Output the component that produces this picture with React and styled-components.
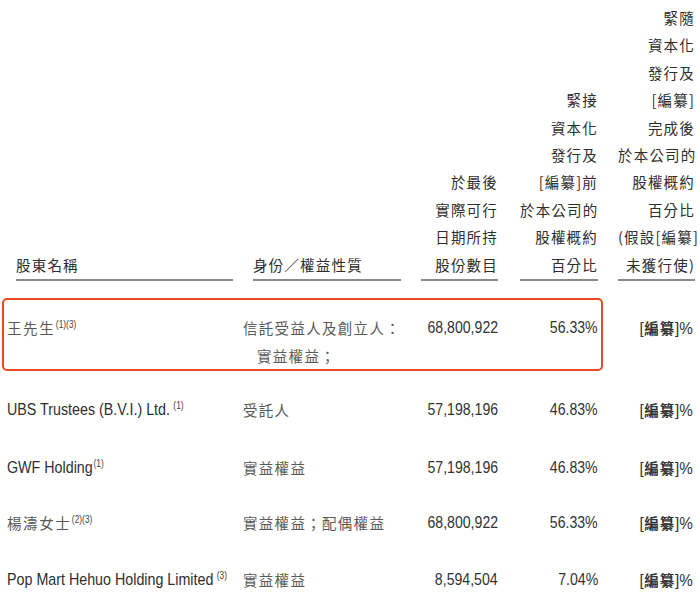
import React from 'react';
import styled, { createGlobalStyle } from 'styled-components';

const GlobalStyle = createGlobalStyle`
  html, body {
    margin: 0;
    padding: 0;
    background: #ffffff;
  }
  body {
    font-family: "Liberation Sans", Arial, "Noto Sans CJK TC", sans-serif;
    color: #333;
  }
`;

const cols = '233px 168px 97px 100px 97px';

const Table = styled.div`
  width: 700px;
  padding-top: 4px;
`;

const HeadRow = styled.div`
  display: grid;
  grid-template-columns: ${cols};
  align-items: end;
`;

const HeadCell = styled.div`
  margin-left: ${(p) => p.$indent}px;
  border-bottom: 2px solid #8a8a8a;
  padding-bottom: 1px;
  font-family: "Noto Sans CJK TC", sans-serif;
  font-size: 14.5px;
  line-height: 27.4px;
  letter-spacing: 1.2px;
  color: #2e2e2e;
  text-align: ${(p) => (p.$right ? 'right' : 'left')};
  white-space: nowrap;
`;

const Row = styled.div`
  position: relative;
  display: grid;
  grid-template-columns: ${cols};
  align-items: start;
  padding-top: ${(p) => p.$gap}px;
  line-height: 28px;
`;

const Highlight = styled.div`
  position: absolute;
  left: 2px;
  top: 17px;
  width: 601px;
  height: 73px;
  box-sizing: border-box;
  border: 2.5px solid #ea4a1f;
  border-radius: 5px;
  pointer-events: none;
`;

/* the source uses a condensed sans; squeeze Liberation Sans to its width */
const Narrow = styled.span`
  display: inline-block;
  transform: scaleX(${(p) => p.$scale || 0.84});
  transform-origin: ${(p) => (p.$right ? 'right' : 'left')} center;
`;

const Name = styled.div`
  padding-left: 7px;
  font-size: 17px;
  color: #2f2f2f;
  white-space: nowrap;
`;

const Zh = styled.span`
  font-family: "Noto Sans CJK TC", sans-serif;
  font-size: 14.5px;
  letter-spacing: 1.6px;
  color: #5a5a5a;
`;

const Sup = styled.sup`
  font-size: 10px;
  letter-spacing: 0;
  vertical-align: 6px;
  line-height: 0;
  margin-left: ${(p) => (p.$space ? 4 : 1)}px;
  color: #444;
`;

const Nature = styled.div`
  padding-left: 10px;
  font-family: "Noto Sans CJK TC", sans-serif;
  font-size: 14.5px;
  letter-spacing: 1.3px;
  color: #5a5a5a;
  white-space: nowrap;
`;

const NatureLine = styled.div`
  padding-left: ${(p) => p.$indent || 0}px;
`;

const Num = styled.div`
  text-align: right;
  font-size: 17px;
  color: #333;
  white-space: nowrap;
`;

const Bracket = styled.span`
  font-family: "Noto Sans CJK TC", sans-serif;
  font-size: 14.5px;
  font-weight: 700;
  letter-spacing: 1px;
  color: #333;
`;

const headers = [
  { indent: 16, lines: ['股東名稱'] },
  { indent: 20, lines: ['身份／權益性質'] },
  { indent: 20, right: true, lines: ['於最後', '實際可行', '日期所持', '股份數目'] },
  {
    indent: 22,
    right: true,
    lines: ['緊接', '資本化', '發行及', '[編纂]前', '於本公司的', '股權概約', '百分比'],
  },
  {
    indent: 20,
    right: true,
    lines: ['緊隨', '資本化', '發行及', '[編纂]', '完成後', '於本公司的', '股權概約', '百分比', '(假設[編纂]', '未獲行使)'],
  },
];

const rows = [
  {
    zh: '王先生',
    sup: '(1)(3)',
    nature: ['信託受益人及創立人：', '實益權益；'],
    shares: '68,800,922',
    pct: '56.33%',
    gap: 33,
    boxed: true,
  },
  {
    name: 'UBS Trustees (B.V.I.) Ltd.',
    sup: '(1)',
    space: true,
    nature: ['受託人'],
    shares: '57,198,196',
    pct: '46.83%',
    gap: 26,
  },
  {
    name: 'GWF Holding',
    sup: '(1)',
    nature: ['實益權益'],
    shares: '57,198,196',
    pct: '46.83%',
    gap: 29,
  },
  {
    zh: '楊濤女士',
    sup: '(2)(3)',
    nature: ['實益權益；配偶權益'],
    shares: '68,800,922',
    pct: '56.33%',
    gap: 26,
  },
  {
    name: 'Pop Mart Hehuo Holding Limited',
    sup: '(3)',
    space: true,
    nature: ['實益權益'],
    shares: '8,594,504',
    pct: '7.04%',
    gap: 28,
  },
];

export default function App() {
  return (
    <>
      <GlobalStyle />
      <Table>
        <HeadRow>
          {headers.map((h, i) => (
            <HeadCell key={i} $indent={h.indent} $right={h.right}>
              {h.lines.map((l) => (
                <div key={l}>{l}</div>
              ))}
            </HeadCell>
          ))}
        </HeadRow>

        {rows.map((r, i) => (
          <Row key={i} $gap={r.gap}>
            {r.boxed && <Highlight />}
            <Name>
              {r.zh ? (
                <>
                  <Zh>{r.zh}</Zh>
                  <Narrow>
                    <Sup $space={r.space}>{r.sup}</Sup>
                  </Narrow>
                </>
              ) : (
                <Narrow>
                  {r.name}
                  <Sup $space={r.space}>{r.sup}</Sup>
                </Narrow>
              )}
            </Name>
            <Nature>
              {r.nature.map((n, j) => (
                <NatureLine key={n} $indent={j > 0 ? 14 : 0}>
                  {n}
                </NatureLine>
              ))}
            </Nature>
            <Num>
              <Narrow $right $scale={0.83}>{r.shares}</Narrow>
            </Num>
            <Num>
              <Narrow $right $scale={0.83}>{r.pct}</Narrow>
            </Num>
            <Num>
              <Narrow $right $scale={0.9}>[</Narrow>
              <Bracket>編纂</Bracket>
              <Narrow $scale={0.9}>]%</Narrow>
            </Num>
          </Row>
        ))}
      </Table>
    </>
  );
}
